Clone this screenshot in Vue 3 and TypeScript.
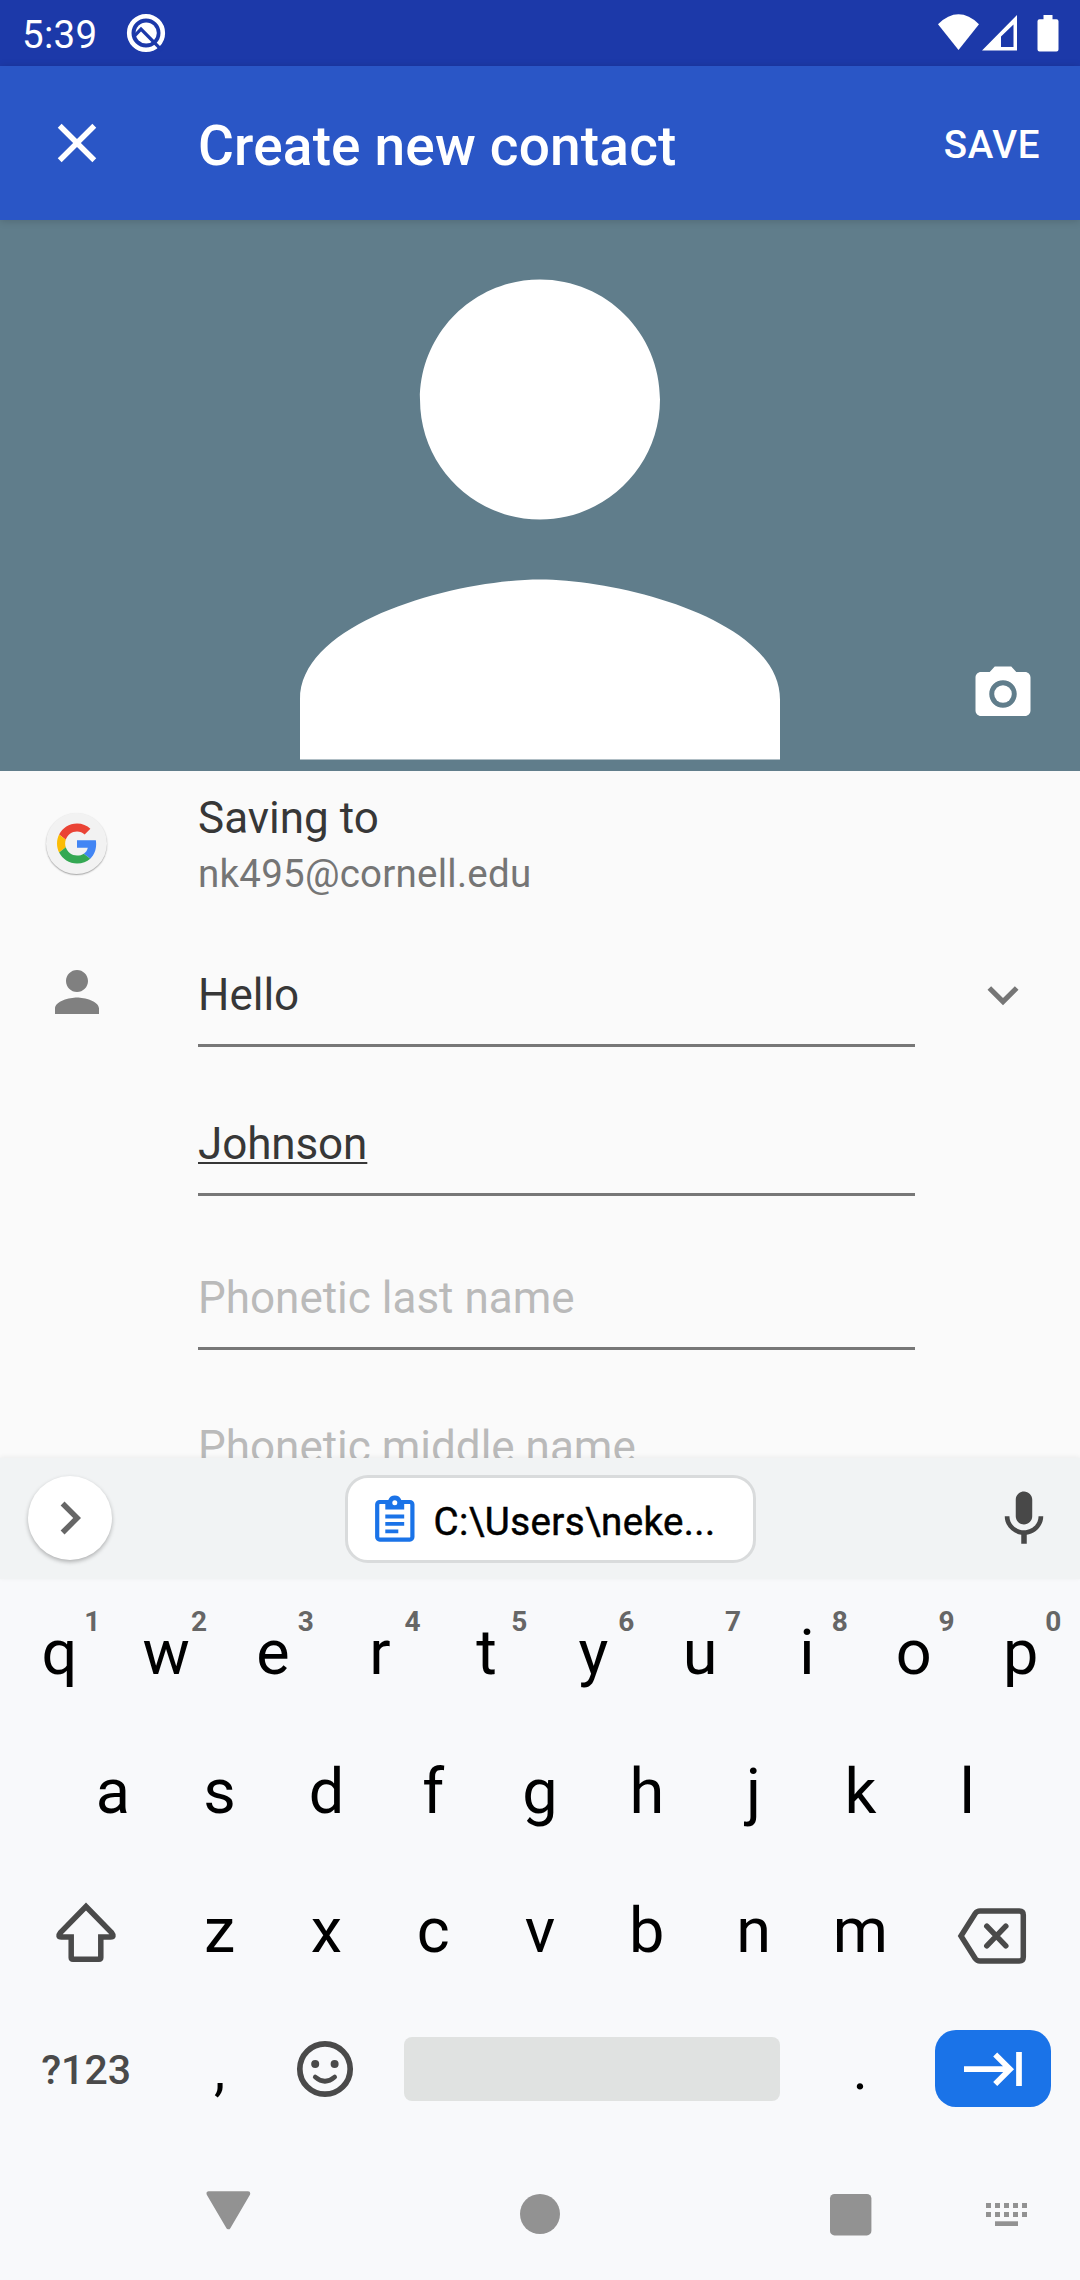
<script setup lang="ts">
interface Field {
  id: string
  text: string
  kind: 'value' | 'composing' | 'hint'
  height: number
}

const fields: Field[] = [
  { id: 'first', text: 'Hello', kind: 'value', height: 149 },
  { id: 'last', text: 'Johnson', kind: 'composing', height: 149 },
  { id: 'phonetic-last', text: 'Phonetic last name', kind: 'hint', height: 154 },
  { id: 'phonetic-middle', text: 'Phonetic middle name', kind: 'hint', height: 149 },
]

const topRow = 'qwertyuiop'.split('').map((letter, i) => ({ letter, digit: String((i + 1) % 10) }))
const homeRow = 'asdfghjkl'.split('')
const bottomRow = 'zxcvbnm'.split('')
const dotColumns = [0, 9, 18, 27, 36]
</script>

<template>
  <div class="screen">
    <header class="status">
      <span class="clock">5:39</span>
      <svg class="q-icon" width="40" height="40" viewBox="0 0 40 40">
        <circle cx="20" cy="20" r="16.800" fill="none" stroke="#fff" stroke-width="4.600" />
        <circle cx="20.200" cy="20" r="10.600" fill="#fff" />
        <path d="M8.500 22.800L15 16.200L36 37.400" fill="none" stroke="#1c39a9" stroke-width="3.300" />
      </svg>
      <svg class="system" width="124" height="40" viewBox="0 0 124 40">
        <path d="M0 10.200Q20.500-9.500 41 10.200L20.500 36Z" fill="#fff" />
        <path fill-rule="evenodd" d="M44 36.500L79 1V36.500ZM63 22.500V33H75.500V10.500Z" fill="#fff" />
        <path d="M105.500 1h9v4.200h4a2 2 0 0 1 2 2V35.500a2 2 0 0 1-2 2h-17a2 2 0 0 1-2-2V7.200a2 2 0 0 1 2-2h4z" fill="#fff" />
      </svg>
    </header>

    <nav class="app-bar">
      <svg class="close" width="66" height="66" viewBox="0 0 24 24">
        <path fill="#fff" d="M19 6.410L17.590 5 12 10.590 6.410 5 5 6.410 10.590 12 5 17.590 6.410 19 12 13.410 17.590 19 19 17.590 13.410 12z" />
      </svg>
      <h1>Create new contact</h1>
      <button class="save">SAVE</button>
    </nav>

    <section class="photo">
      <svg width="1080" height="551" viewBox="-6 2.0167 36 18.3667">
        <path fill="#fff" d="M12 12c2.210 0 4-1.790 4-4s-1.790-4-4-4-4 1.790-4 4 1.790 4 4 4zm0 2c-2.670 0-8 1.340-8 4v2h16v-2c0-2.660-5.330-4-8-4z" />
      </svg>
      <svg class="camera" width="66" height="66" viewBox="0 0 24 24" fill="#fff">
        <circle cx="12" cy="12" r="3.200" />
        <path d="M9 2L7.170 4H4c-1.100 0-2 .9-2 2v12c0 1.100.9 2 2 2h16c1.100 0 2-.9 2-2V6c0-1.100-.9-2-2-2h-3.170L15 2H9zm3 15c-2.760 0-5-2.240-5-5s2.240-5 5-5 5 2.240 5 5-2.240 5-5 5z" />
      </svg>
    </section>

    <main class="form">
      <div class="account">
        <div class="avatar">
          <svg width="40" height="41" viewBox="0 0 48 48">
            <path fill="#EA4335" d="M24 9.500c3.540 0 6.710 1.220 9.210 3.600l6.850-6.850C35.900 2.380 30.470 0 24 0 14.620 0 6.510 5.380 2.560 13.220l7.980 6.190C12.430 13.720 17.740 9.500 24 9.500z" />
            <path fill="#4285F4" d="M46.980 24.550c0-1.570-.15-3.090-.38-4.550H24v9.020h12.940c-.58 2.960-2.260 5.480-4.780 7.180l7.730 6c4.510-4.180 7.090-10.360 7.090-17.650z" />
            <path fill="#FBBC05" d="M10.530 28.590c-.48-1.450-.76-2.990-.76-4.590s.27-3.140.76-4.590l-7.980-6.190C.92 16.460 0 20.120 0 24c0 3.880.92 7.540 2.560 10.780l7.970-6.190z" />
            <path fill="#34A853" d="M24 48c6.480 0 11.930-2.130 15.890-5.810l-7.730-6c-2.150 1.450-4.920 2.300-8.160 2.300-6.260 0-11.570-4.220-13.470-9.910l-7.980 6.190C6.510 42.620 14.620 48 24 48z" />
          </svg>
        </div>
        <div class="account-text">
          <div class="saving">Saving to</div>
          <div class="email">nk495@cornell.edu</div>
        </div>
      </div>

      <div class="names">
        <svg class="person" width="66" height="66" viewBox="0 0 24 24">
          <path fill="#808080" d="M12 12c2.210 0 4-1.790 4-4s-1.790-4-4-4-4 1.790-4 4 1.790 4 4 4zm0 2c-2.670 0-8 1.340-8 4v2h16v-2c0-2.660-5.330-4-8-4z" />
        </svg>
        <div class="fields">
          <div v-for="f in fields" :key="f.id" class="field" :style="{ height: f.height + 'px' }">
            <span :class="f.kind">{{ f.text }}</span>
          </div>
        </div>
        <svg class="expand" width="62" height="62" viewBox="0 0 24 24">
          <path fill="#767676" d="M16.590 8.590L12 13.170 7.410 8.590 6 10l6 6 6-6z" />
        </svg>
      </div>
    </main>

    <section class="suggestions">
      <div class="more">
        <svg width="66" height="66" viewBox="0 0 24 24">
          <path fill="#666" d="M10 6L8.590 7.410 13.170 12l-4.580 4.590L10 18l6-6z" />
        </svg>
      </div>
      <div class="chip">
        <svg width="40" height="48" viewBox="0 0 40 48">
          <rect x="2.200" y="7" width="35.200" height="37.600" rx="2.500" fill="none" stroke="#1a73e8" stroke-width="4.200" />
          <path d="M10.300 5h3a7 7 0 0 1 13 0h2.900v9.400H10.300z" fill="#1a73e8" />
          <circle cx="19.800" cy="7.700" r="2.500" fill="#fff" />
          <path d="M10.300 21.500h18.900M10.300 28.900h18.900M10.300 36.300h13" stroke="#1a73e8" stroke-width="3.800" />
        </svg>
        <span>C:\Users\neke...</span>
      </div>
      <svg class="mic" width="66" height="66" viewBox="0 0 24 24">
        <path fill="#484848" d="M12 14c1.660 0 2.990-1.340 2.990-3L15 5c0-1.660-1.340-3-3-3S9 3.340 9 5v6c0 1.660 1.340 3 3 3zm5.300-3c0 3-2.540 5.100-5.300 5.100S6.700 14 6.700 11H5c0 3.410 2.720 6.230 6 6.720V21h2v-3.280c3.280-.48 6-3.300 6-6.720h-1.700z" />
      </svg>
    </section>

    <section class="keyboard">
      <div class="row">
        <div v-for="k in topRow" :key="k.letter" class="key">
          {{ k.letter }}<sup>{{ k.digit }}</sup>
        </div>
      </div>
      <div class="row">
        <div v-for="k in homeRow" :key="k" class="key">{{ k }}</div>
      </div>
      <div class="row">
        <div class="key wide">
          <svg class="shift" width="64" height="62" viewBox="0 0 64 62">
            <path d="M32 5.500L57.500 31.500Q61 36 56.500 36H46.800V56.500Q46.800 58.200 45 58.200H19Q17.200 58.200 17.200 56.500V36H7.500Q3 36 6.500 31.500Z" fill="none" stroke="#4a4a4a" stroke-width="5.500" />
          </svg>
        </div>
        <div v-for="k in bottomRow" :key="k" class="key">{{ k }}</div>
        <div class="key wide">
          <svg class="delete" width="70" height="56" viewBox="0 0 70 56" fill="none" stroke="#4a4a4a" stroke-width="5.500">
            <path d="M4 28L18.200 5.500Q20 3 23 3H62.300Q66.300 3 66.300 7V49Q66.300 53 62.300 53H23Q20 53 18.200 50.500Z" />
            <path d="M29.800 18.200L48.800 37.800M48.800 18.200L29.800 37.800" stroke-linecap="round" />
          </svg>
        </div>
      </div>
      <div class="row">
        <div class="key wide symbols">?123</div>
        <div class="key punctuation">,</div>
        <div class="key">
          <svg class="emoji" width="58" height="58" viewBox="0 0 58 58" fill="none" stroke="#4a4a4a">
            <circle cx="29" cy="29" r="25.200" stroke-width="5.700" />
            <circle cx="19.200" cy="24" r="4" fill="#4a4a4a" stroke="none" />
            <circle cx="38.600" cy="24" r="4" fill="#4a4a4a" stroke="none" />
            <path d="M19.200 37Q29 45.500 38.700 37" stroke-width="4.600" stroke-linecap="round" />
          </svg>
        </div>
        <div class="space-cell"><div class="space"></div></div>
        <div class="key punctuation">.</div>
        <div class="key wide">
          <div class="next">
            <svg width="58" height="34" viewBox="0 0 58 34" fill="none" stroke="#fff" stroke-width="5.700">
              <path d="M0 17.200H47M31.200 2.500L46 17.200L31.200 32M55 0V34" />
            </svg>
          </div>
        </div>
      </div>
    </section>

    <footer class="nav">
      <svg width="1080" height="60" viewBox="0 0 1080 60" fill="#929292">
        <path d="M208.700 3.500H248L228.400 37Z" stroke="#929292" stroke-width="4.500" stroke-linejoin="round" />
        <circle cx="540" cy="24" r="20" />
        <rect x="830" y="4" width="41.400" height="41.400" rx="4.500" />
        <g v-for="x in dotColumns" :key="x">
          <rect :x="986 + x" y="13" width="5" height="5" />
          <rect :x="986 + x" y="22" width="5" height="5" />
        </g>
        <rect x="995" y="31.300" width="23" height="4.700" />
      </svg>
    </footer>
  </div>
</template>

<style>
body {
  margin: 0;
}
</style>

<style scoped>
.screen {
  width: 1080px;
  height: 2280px;
  display: flex;
  flex-direction: column;
  overflow: hidden;
  background: #f8f9fb;
  font-family: Roboto, 'Liberation Sans', sans-serif;
}

.screen svg {
  display: block;
  flex: none;
}

.status {
  height: 66px;
  flex: none;
  box-sizing: border-box;
  padding: 0 22px;
  display: flex;
  align-items: center;
  background: #1c39a9;
  color: #fff;
}

.clock {
  width: 104px;
  font-size: 38.5px;
  line-height: 66px;
  padding-top: 3px;
  letter-spacing: 0.3px;
}

.system {
  margin-left: auto;
  margin-right: -4px;
  margin-top: 2px;
}

.app-bar {
  height: 154px;
  flex: none;
  box-sizing: border-box;
  padding: 0 40px 0 44px;
  display: flex;
  align-items: center;
  background: #2a56c6;
  color: #fff;
  position: relative;
  box-shadow: 0 1px 8px rgba(0, 0, 0, 0.16);
  z-index: 1;
}

h1 {
  margin: 5px 0 0 88px;
  font-size: 55px;
  line-height: 64px;
  font-weight: 500;
  letter-spacing: 0.17px;
}

.save {
  margin-left: auto;
  margin-top: 3px;
  padding: 0;
  border: 0;
  background: none;
  color: #fff;
  font: 500 38.5px/46px Roboto, sans-serif;
  letter-spacing: 0.6px;
}

.photo {
  height: 551px;
  flex: none;
  position: relative;
  background: #607d8b;
}

.camera {
  position: absolute;
  right: 44px;
  bottom: 44px;
}

.form {
  height: 687px;
  flex: none;
  overflow: hidden;
  background: #fafafa;
}

.account {
  height: 149px;
  display: flex;
  padding-left: 46px;
}

.avatar {
  width: 61px;
  height: 61px;
  margin-top: 41.5px;
  border-radius: 50%;
  display: flex;
  align-items: center;
  justify-content: center;
  background: #f2f2f2;
  box-shadow: 0 1px 1.5px rgba(0, 0, 0, 0.35);
}

.account-text {
  margin-left: 91px;
  padding-top: 21px;
}

.saving {
  font-size: 44px;
  line-height: 52px;
  color: #373737;
}

.email {
  margin-top: 7px;
  font-size: 38.5px;
  line-height: 46px;
  letter-spacing: 0.24px;
  color: #757575;
}

.names {
  display: flex;
  padding-left: 44px;
}

.person {
  margin-top: 39px;
}

.fields {
  width: 717px;
  margin: -22px 0 0 88px;
}

.field {
  box-sizing: border-box;
  display: flex;
  align-items: flex-end;
  padding-bottom: 23px;
  border-bottom: 3px solid #777;
  font-size: 44px;
  line-height: 52px;
  color: #373737;
}

.composing {
  letter-spacing: -0.1px;
  text-decoration: underline;
  text-decoration-thickness: 2.4px;
  text-underline-offset: 3px;
  text-decoration-skip-ink: none;
}

.hint {
  color: #bababa;
}

.expand {
  margin: 44px 0 0 57px;
}

.suggestions {
  height: 121px;
  flex: none;
  box-sizing: border-box;
  padding: 0 23px 0 28px;
  display: flex;
  align-items: center;
  justify-content: space-between;
  position: relative;
  background: #f1f3f4;
  box-shadow: 0 -1px 5px rgba(0, 0, 0, 0.06);
}

.more {
  width: 84px;
  height: 84px;
  margin-top: -1px;
  border-radius: 50%;
  display: flex;
  align-items: center;
  justify-content: center;
  background: #fff;
  box-shadow: 0 2px 4px rgba(0, 0, 0, 0.28);
}

.chip {
  width: 411px;
  height: 88px;
  margin-left: -3px;
  box-sizing: border-box;
  border: 3px solid #d9dbdc;
  border-radius: 23px;
  padding-left: 27px;
  display: flex;
  align-items: center;
  background: #fff;
  color: #000;
  font-size: 38.5px;
}

.chip span {
  margin-left: 19px;
  padding-top: 5px;
  white-space: nowrap;
  letter-spacing: 0.38px;
  -webkit-text-stroke: 0.5px #000;
}

.keyboard {
  height: 570px;
  flex: none;
  padding: 8px 6px 0;
}

.row {
  height: 139px;
  display: flex;
  justify-content: center;
}

.key {
  width: 106.8px;
  flex: none;
  display: flex;
  justify-content: center;
  position: relative;
  font-size: 63px;
  line-height: 132px;
  color: #000;
}

.wide {
  width: 160.2px;
}

sup {
  position: absolute;
  left: 77.2px;
  top: 18px;
  width: 18px;
  text-align: center;
  font-size: 28px;
  line-height: 34px;
  font-weight: 700;
  color: #666;
}

.shift {
  margin: 36px 0 0 -1px;
}

.delete {
  margin: 43px 0 0 -3px;
}

.symbols {
  font-size: 41px;
  font-weight: 500;
  color: #4a4a4a;
}

.punctuation {
  font-size: 57px;
}

.emoji {
  margin: 36px 0 0 -3px;
}

.space-cell {
  width: 427.2px;
  display: flex;
  justify-content: center;
}

.space {
  width: 376px;
  height: 64px;
  margin: 33px 3px 0 0;
  border-radius: 8px;
  background: #e0e2e1;
}

.next {
  width: 116px;
  height: 77px;
  margin: 26px 2px 0 0;
  border-radius: 21px;
  display: flex;
  align-items: center;
  justify-content: center;
  background: #1a73e8;
}

.nav {
  padding-top: 33px;
}
</style>
